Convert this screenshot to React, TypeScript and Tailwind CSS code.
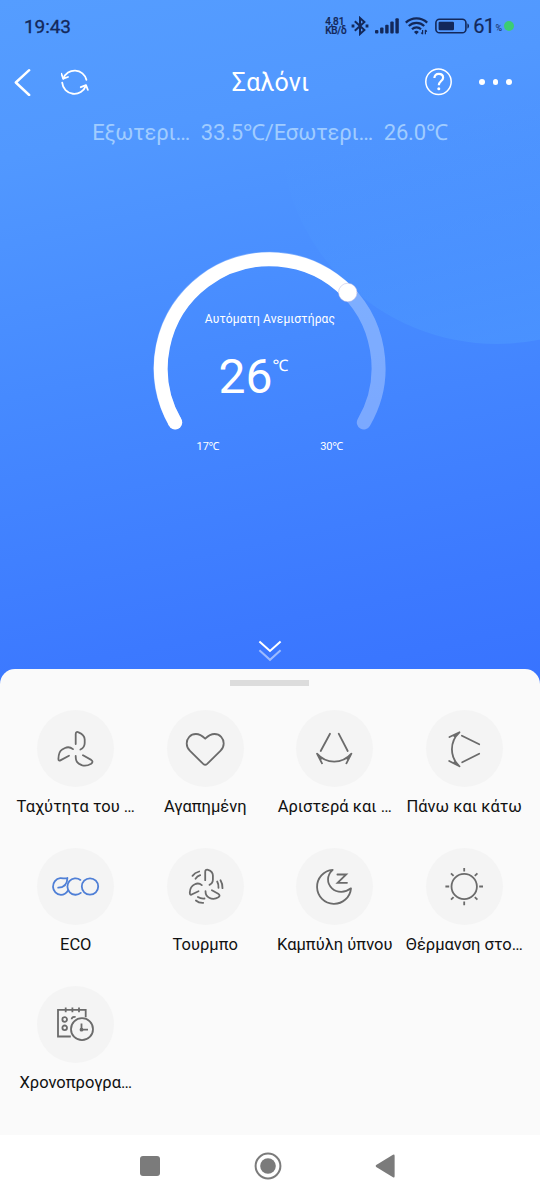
import type { ReactNode } from 'react';

interface Mode {
    label: string;
    icon: ReactNode;
}

/* Mode icons share one viewBox, with 0,0 in the middle of the round button. */

const FanIcon = (
    <>
        <path d="M.5-4.5V-14.3Q.5-17.4 3.4-16.2C7-14.7 9.5-12.4 9.5-9V-5.5C9.5-3 8-.3 5.2 1" />
        <path d="M-2.2.6C-5-1.6-7.5-1.8-10.2-.5L-13 1C-16 2.6-16.7 6-16.8 10.5Q-16.8 13-14.4 11.6L-6.2 7.2" />
        <path d="M.5 7.5C.4 11.5 1.2 13.8 4 15.4L6.5 16.6C9.5 17.8 13 17 16 15.2Q18.6 13.4 16 11.4L7.8 6.8" />
    </>
);

const HeartIcon = (
    <path d="M0-9.8C-3.5-13.2-6-14.5-9.3-14.5C-14.8-14.5-18.5-10.3-18.5-5C-18.5-2-17.2.4-15.2 2.4L-2 15.4Q0 17.2 2 15.4L15.2 2.4C17.2.4 18.5-2 18.5-5C18.5-10.3 14.8-14.5 9.3-14.5C6-14.5 3.5-13.2 0-9.8Z" />
);

const SwingSideIcon = (
    <>
        <path d="M-4.2-14.8L-13.5 2.5M4.5-14.8L13.5 2.5" />
        <path d="M-12.2 14.8L-17.2 5.2C-8 15.8 8 15.8 17.2 5.2L12.2 14.8M-16.5 6.2L-13.2 10.4M16.5 6.2L13.2 10.4" />
    </>
);

const SwingUpIcon = (
    <>
        <path d="M-2.3-12.8L15-4.2M15 5.2L-2 13.8" />
        <path d="M-14.7-11.5L-4.7-16.2C-14.8-7-14.8 8.5-4.7 17.8L-15 12.5M-6-15L-9.8-12.2M-6 16.4L-9.8 13.7" />
    </>
);

const EcoIcon = (
    <g stroke="#4f7fd6">
        <path d="M-17 1.2C-12.2 1-7.9-1.4-7.8-8.5C-10-7.6-12.4-8.5-15-8.3A8.4 8.4 0 0 0-14.3 8.4C-11 8.4-8.8 6.6-7.2 4" />
        <path d="M5.2-6.6A8.2 8.2 0 1 0 5.6 6.4" />
        <circle cx="14.8" cy="0" r="8.2" />
    </g>
);

const TurboIcon = (
    <>
        <path d="M0-6.3V-14.5Q0-17.3 2.8-16.7C6-15.6 7.7-13.4 7.7-11V-7C7.7-4.5 6.5-2.7 4.3-1.6" />
        <path d="M-3.4-1.4C-5.5-3.2-8-3.4-10.4-2.2C-13.6-.7-15.2 1.6-15.4 6Q-15.5 9.2-13 7.8L-6.7 4.7" />
        <path d="M.3 4.7C.3 8 1.2 9.8 4 11.2C7.4 13 10.6 12.4 13.2 10.8Q15.6 9 13 7.2L6.7 3.7" />
        <path d="M-12.7-10.6Q-10.4-13.8-6-15M-9.7-7.7Q-8-10.4-5-11.3M15.3-6.3Q17.6-2.5 17.3 1.7M12-5Q13.6-2 13.3 1.3M-7.3 10.5Q-4.4 12.4-.7 12M-9.3 14Q-6.4 16.6-2 16.4" />
    </>
);

const MoonIcon = (
    <>
        <path d="M-1.5-16.6A17 17 0 1 0 16.8 1.8C11 6.4 3 6.6-2.2 1.8C-7.6-3.2-7.6-11-1.5-16.6Z" />
        <path d="M3.2-12H12L3.4-3.7H12.8" strokeLinejoin="miter" />
    </>
);

const SunIcon = (
    <>
        <circle r="12.7" />
        <path d="M0-18.6V-15M0 15V18.8M-18.8 0H-15M15 0H18.8M-13.2-13.2L-10.6-10.6M13.2-13.2L10.6-10.6M-13.2 13.2L-10.6 10.6M13.2 13.2L10.6 10.6" strokeLinecap="butt" />
    </>
);

const ScheduleIcon = (
    <g strokeLinejoin="miter" strokeLinecap="butt">
        <path d="M-4.4 12H-17.2V-14.6H10.5V-7.2M-9.5-17V-12.2M-2.8-17V-12.2M3.8-17V-12.2" />
        <circle cx="-10.5" cy="-5" r="2.3" />
        <circle cx="-10.5" cy="3.3" r="2.3" />
        <path d="M-3.6-5.2A2.6 2.6 0 0 1 .4-7.2" />
        <circle cx="6.8" cy="4.7" r="11" />
        <path d="M6.3-1V5.2H12.8" />
        <circle cx="6.3" cy="5.2" r="1" />
    </g>
);

const modes: Mode[] = [
    { label: 'Ταχύτητα του …', icon: FanIcon },
    { label: 'Αγαπημένη', icon: HeartIcon },
    { label: 'Αριστερά και …', icon: SwingSideIcon },
    { label: 'Πάνω και κάτω', icon: SwingUpIcon },
    { label: 'ECO', icon: EcoIcon },
    { label: 'Τουρμπο', icon: TurboIcon },
    { label: 'Καμπύλη ύπνου', icon: MoonIcon },
    { label: 'Θέρμανση στο…', icon: SunIcon },
    { label: 'Χρονοπρογρα…', icon: ScheduleIcon },
];

function StatusBar() {
    return (
        <div className="flex h-[52px] items-center pl-6 pr-[26px] text-[#13285a]">
            <span className="text-[19px] leading-none tracking-[-0.1px] [-webkit-text-stroke:0.3px]">19:43</span>
            <div className="ml-auto flex items-center">
                <div className="w-[23px] whitespace-nowrap text-[10px] font-medium leading-[9px] [-webkit-text-stroke:0.2px]">
                    <div>4,81</div>
                    <div className="tracking-[-0.2px]">KB/δ</div>
                </div>
                {/* bluetooth */}
                <svg className="ml-[3px] h-5 w-[18px]" viewBox="0 0 18 20" fill="none" stroke="currentColor" strokeWidth="2">
                    <path d="M3.8 5.2L13.4 14L9 18V2L13.4 6L3.8 14.8" />
                    <path d="M.6 10H3.4M14.6 10H17.4" strokeWidth="2.8" />
                </svg>
                {/* signal */}
                <svg className="ml-[6px] h-4 w-6" viewBox="0 0 24 16" fill="currentColor">
                    <rect x="0" y="12" width="3.4" height="3.4" rx="1" />
                    <rect x="5.1" y="9.6" width="3.4" height="5.8" rx="1" />
                    <rect x="10.2" y="6.8" width="3.4" height="8.6" rx="1" />
                    <rect x="15.3" y="3.6" width="3.4" height="11.8" rx="1" />
                    <rect x="20.4" y=".2" width="3.4" height="15.2" rx="1" />
                </svg>
                {/* wifi */}
                <svg className="ml-[6px] h-[18px] w-6" viewBox="0 0 24 18" fill="none" stroke="currentColor" strokeWidth="2.2">
                    <path d="M.8 5.6A15.4 15.4 0 0 1 22.2 5.6M3.8 9A11 11 0 0 1 19.2 9M7 12.2A6.4 6.4 0 0 1 16 12.2" />
                    <path d="M9 15A3.4 3.4 0 0 1 13.8 15L11.4 17.6Z" fill="currentColor" stroke="none" />
                    <path d="M17.6 13V17.2M16.2 15.6L17.6 17.2M20.4 17.2V13M21.8 14.6L20.4 13" strokeWidth="1.2" />
                </svg>
                {/* battery */}
                <svg className="ml-[6px] h-4 w-[35px]" viewBox="0 0 35 16">
                    <rect x=".9" y="1.2" width="30" height="13.6" rx="3.6" fill="none" stroke="currentColor" strokeWidth="1.6" />
                    <rect x="3.6" y="3.7" width="15.4" height="8.6" rx="1.2" fill="currentColor" />
                    <path d="M32.4 5.5C34.6 6 34.6 10 32.4 10.5Z" fill="currentColor" />
                </svg>
                <span className="ml-[3px] text-[20px] leading-none tracking-[-0.6px] [-webkit-text-stroke:0.2px]">61</span>
                <span className="ml-px mt-[5px] text-[9px] leading-none">%</span>
                <span className="ml-[2px] h-[10px] w-[10px] rounded-full bg-[#3ccc74]" />
            </div>
        </div>
    );
}

function Header() {
    return (
        <header className="grid h-[60px] grid-cols-[1fr_auto_1fr] items-center pl-[14px] pr-[28px] text-white">
            <div className="flex items-center gap-[30px]">
                <svg className="h-7 w-[17px]" viewBox="0 0 17 28" fill="none" stroke="currentColor" strokeWidth="2.4" strokeLinecap="round" strokeLinejoin="round">
                    <path d="M15.2 2.2L1.8 14.5L15.2 27" />
                </svg>
                <svg className="h-7 w-7" viewBox="0 0 28 28" fill="none" stroke="currentColor" strokeWidth="1.8" strokeLinecap="round" strokeLinejoin="round">
                    <path d="M25.4 11.8A12 12 0 0 0 2.4 10.6M1.2 14.6A12.2 12.2 0 0 0 24.9 17.6" />
                    <path d="M.4 5.8L2.2 10.7L7 9M19.8 19.2L25 17.1L26.8 21.8" />
                </svg>
            </div>
            <h1 className="pl-[15px] text-[25px] leading-none tracking-[0.1px]">Σαλόνι</h1>
            <div className="flex items-center justify-end gap-[26px]">
                <svg className="h-7 w-7" viewBox="0 0 28 28" fill="none" stroke="currentColor" strokeWidth="1.5">
                    <circle cx="13.5" cy="13.7" r="12.7" />
                    <path d="M9.4 10.1C9.4 7.4 11.1 5.9 13.7 5.9C16.3 5.9 18.1 7.4 18.1 9.7C18.1 12.9 13.8 13.3 13.8 17.3" strokeWidth="2.2" />
                    <circle cx="13.8" cy="20.7" r="1.5" fill="currentColor" stroke="none" />
                </svg>
                <div className="mr-[0.5px] flex gap-[8px]">
                    <span className="h-[5.5px] w-[5.5px] rounded-full bg-white" />
                    <span className="h-[5.5px] w-[5.5px] rounded-full bg-white" />
                    <span className="h-[5.5px] w-[5.5px] rounded-full bg-white" />
                </div>
            </div>
        </header>
    );
}

function Dial() {
    return (
        <div className="relative mx-auto mt-[105px] h-[230px] w-[240px] text-white">
            <svg className="absolute inset-0 h-[230px] w-[240px]" viewBox="-120.5 -118 240 230" fill="none" strokeWidth="14" strokeLinecap="round">
                <path d="M-95.3 54.5A109 109 0 1 1 93.3 54.5" stroke="#fff" strokeOpacity=".3" />
                <path d="M-95.3 54.5A109 109 0 0 1 77.5-75.6" stroke="#fff" strokeLinecap="butt" />
                <circle cx="-95.3" cy="54.5" r="7" fill="#fff" stroke="none" />
                <circle cx="77.3" cy="-75.5" r="9.3" fill="#fff" stroke="#b9b9e4" strokeWidth=".5" />
            </svg>
            <div className="relative flex h-full flex-col items-center">
                <div className="pt-[62px] text-[12px] leading-[14px] tracking-[0.15px]">Αυτόματη Ανεμιστήρας</div>
                <div className="mt-[23px] flex items-start pr-[34px]">
                    <span className="text-[48px] leading-[56px]">26</span>
                    <span className="mt-[7px] text-[16px] leading-[20px] tracking-[-1px]">℃</span>
                </div>
                <div className="mt-[34px] flex w-[147px] justify-between text-[11px] leading-[16px]">
                    <span>17℃</span>
                    <span>30℃</span>
                </div>
            </div>
        </div>
    );
}

function ModeButton({ mode }: { mode: Mode }) {
    return (
        <button className="flex h-[138px] flex-col items-center">
            <span className="h-[77px] w-[77px] rounded-full bg-[#f4f4f4]">
                <svg className="h-[77px] w-[77px]" viewBox="-38.2 -38.5 77 77" fill="none" stroke="#6b6b6b" strokeWidth="1.8" strokeLinecap="round" strokeLinejoin="round">
                    {mode.icon}
                </svg>
            </span>
            <span className="mt-[10px] whitespace-nowrap text-[16.5px] leading-[20px] text-[#111]">{mode.label}</span>
        </button>
    );
}

function NavBar() {
    return (
        <nav className="flex h-[65px] items-center bg-white pb-[3px] pl-[140px]">
            <div className="h-5 w-5 rounded-[3px] bg-[#7b7b7b]" />
            <svg className="ml-[94px] h-7 w-7" viewBox="0 0 28 28">
                <circle cx="14" cy="14" r="12.4" fill="none" stroke="#7b7b7b" strokeWidth="2" />
                <circle cx="14" cy="14" r="7.8" fill="#7b7b7b" />
            </svg>
            <svg className="ml-[93px] h-6 w-5" viewBox="0 0 20 24" fill="#7b7b7b">
                <path d="M1.2 11L18 .8Q19.6 0 19.6 1.8V22.2Q19.6 24 18 23.2L1.2 13Q0 12 1.2 11Z" />
            </svg>
        </nav>
    );
}

export default function App() {
    return (
        <div className="flex h-[1200px] w-[540px] flex-col overflow-hidden bg-[#fafafa] font-[Roboto,'Noto_Sans','Noto_Sans_CJK_SC',sans-serif]">
            <section className="relative h-[684px] overflow-hidden bg-[linear-gradient(168deg,#559dff_0%,#5198ff_20%,#468aff_50%,#3c79ff_85%,#3873ff_100%)]">
                <div className="absolute left-[280px] top-[-90px] h-[434px] w-[434px] rounded-full bg-[linear-gradient(165deg,#529bff00_45%,#52a2ff78_100%)]" />
                <div className="relative">
                    <StatusBar />
                    <Header />
                    <p className="mt-[9px] whitespace-pre text-center text-[22px] leading-[24px] tracking-[-0.15px] text-[#a0ccff]">Εξωτερι…  33.5℃/Εσωτερι…  26.0℃</p>
                    <Dial />
                    <svg className="mx-auto mt-[160px] h-6 w-6" viewBox="0 0 24 24" fill="none" stroke="#fff" strokeWidth="2">
                        <path d="M1.4 1.6L12 11L22.6 1.6" />
                        <path d="M1.4 10.2L12 19.8L22.6 10.2" strokeOpacity=".5" />
                    </svg>
                </div>
            </section>
            <main className="relative -mt-[15px] flex h-[466px] flex-col rounded-t-[15px] bg-[#fafafa]">
                <div className="ml-[230px] mt-[11px] h-[6px] w-[79px] bg-[#dcdcdc]" />
                <div className="ml-[11px] mt-6 grid w-[518px] grid-cols-4">
                    {modes.map((m) => <ModeButton key={m.label} mode={m} />)}
                </div>
            </main>
            <NavBar />
        </div>
    );
}
